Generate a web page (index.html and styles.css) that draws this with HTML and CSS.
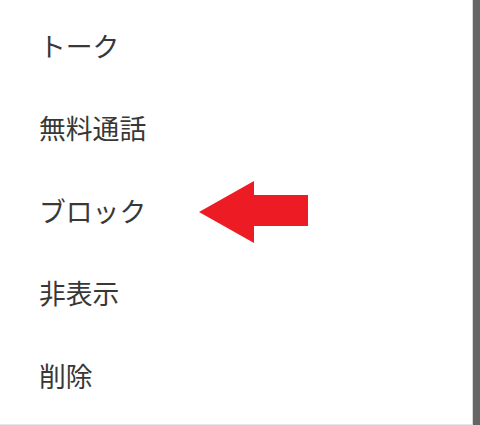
FILE: index.html
```html
<!DOCTYPE html>
<html lang="ja">
<head>
<meta charset="utf-8">
<link rel="stylesheet" href="styles.css">
</head>
<body>
<div class="screen">
  <div class="menu">
    <div class="item">トーク</div>
    <div class="item">無料通話</div>
    <div class="item">ブロック</div>
    <div class="item">非表示</div>
    <div class="item">削除</div>
    <svg class="arrow" width="110" height="62" viewBox="0 0 110 62">
      <polygon points="0,31 55,0 55,14 109,14 109,45 55,45 55,62" fill="#ed1c24"/>
    </svg>
  </div>
  <div class="edge"></div>
</div>
</body>
</html>
```
FILE: styles.css
```css
html, body {
  margin: 0;
  padding: 0;
  background: #ffffff;
}
.screen {
  display: flex;
  width: 480px;
  height: 425px;
  overflow: hidden;
}
.menu {
  position: relative;
  flex: 0 0 473px;
  box-sizing: border-box;
  border-right: 1px solid #d8d8d8;
  border-bottom: 1px solid #e6e6e6;
  padding-top: 4px;
  display: flex;
  flex-direction: column;
}
.item {
  height: 82.5px;
  display: flex;
  align-items: center;
  padding-left: 39px;
  font-family: "Noto Sans CJK JP", "Noto Sans", sans-serif;
  font-size: 26.8px;
  color: #383838;
}
.edge {
  flex: 0 0 7px;
  background: #666666;
}
.arrow {
  position: absolute;
  left: 199px;
  top: 181px;
}
```
